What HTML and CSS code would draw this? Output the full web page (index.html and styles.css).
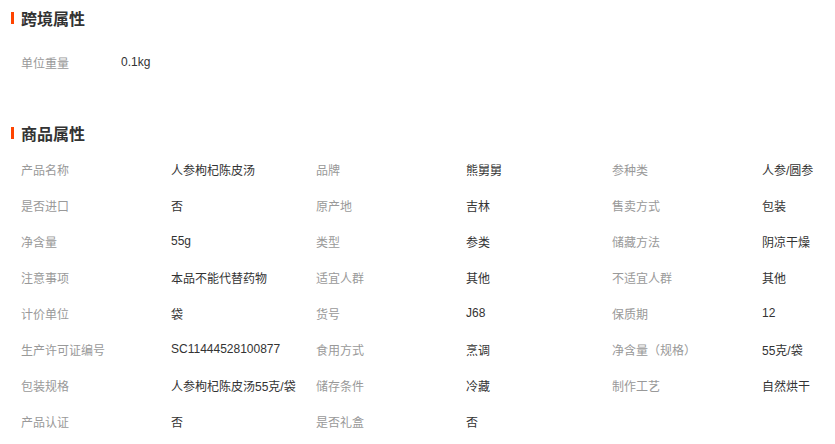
FILE: index.html
```html
<!DOCTYPE html>
<html>
<head>
    <meta charset="utf-8">
    <title>商品属性</title>
    <link rel="stylesheet" href="styles.css">
</head>
<body>

    <div class="Section">
        <div class="SectionTitle"><span class="Bar"></span>跨境属性</div>
        <div class="CrossRow">
            <span class="Label CrossLabel">单位重量</span>
            <span class="Value">0.1kg</span>
        </div>
    </div>

    <div class="Section" id="GoodsSection">
        <div class="SectionTitle"><span class="Bar"></span>商品属性</div>
        <div class="AttrGrid">
            <span class="Label">产品名称</span><span class="Value">人参枸杞陈皮汤</span>
            <span class="Label">品牌</span><span class="Value">熊舅舅</span>
            <span class="Label">参种类</span><span class="Value">人参/圆参</span>

            <span class="Label">是否进口</span><span class="Value">否</span>
            <span class="Label">原产地</span><span class="Value">吉林</span>
            <span class="Label">售卖方式</span><span class="Value">包装</span>

            <span class="Label">净含量</span><span class="Value">55g</span>
            <span class="Label">类型</span><span class="Value">参类</span>
            <span class="Label">储藏方法</span><span class="Value">阴凉干燥</span>

            <span class="Label">注意事项</span><span class="Value">本品不能代替药物</span>
            <span class="Label">适宜人群</span><span class="Value">其他</span>
            <span class="Label">不适宜人群</span><span class="Value">其他</span>

            <span class="Label">计价单位</span><span class="Value">袋</span>
            <span class="Label">货号</span><span class="Value">J68</span>
            <span class="Label">保质期</span><span class="Value">12</span>

            <span class="Label">生产许可证编号</span><span class="Value">SC11444528100877</span>
            <span class="Label">食用方式</span><span class="Value">烹调</span>
            <span class="Label">净含量（规格）</span><span class="Value">55克/袋</span>

            <span class="Label">包装规格</span><span class="Value">人参枸杞陈皮汤55克/袋</span>
            <span class="Label">储存条件</span><span class="Value">冷藏</span>
            <span class="Label">制作工艺</span><span class="Value">自然烘干</span>

            <span class="Label">产品认证</span><span class="Value">否</span>
            <span class="Label">是否礼盒</span><span class="Value">否</span>
        </div>
    </div>

</body>
</html>
```

FILE: styles.css
```css
body {
    margin: 0;
    background: #fff;
    font-family: "Liberation Sans", "Noto Sans CJK SC", sans-serif;
    font-size: 12px;
    color: #333;
}

.Section {
    width: 835px;
    overflow: hidden;
}

#GoodsSection {
    margin-top: 35px;
}

.SectionTitle {
    display: flex;
    align-items: center;
    gap: 7px;
    height: 36px;
    padding-left: 11px;
    font-size: 16px;
    font-weight: bold;
    color: #333;
}

.Bar {
    width: 3px;
    height: 12px;
    background: #ff4400;
}

.CrossRow {
    display: flex;
    align-items: center;
    height: 36px;
    margin-top: 8px;
    padding-left: 21px;
}

.CrossLabel {
    width: 100px;
}

.AttrGrid {
    display: grid;
    grid-template-columns: 150px 145px 150px 146px 150px 1fr;
    grid-auto-rows: 36px;
    align-items: center;
    padding-left: 21px;
}

.Label {
    color: #999;
    white-space: nowrap;
}

.Value {
    color: #333;
    white-space: nowrap;
}
```
